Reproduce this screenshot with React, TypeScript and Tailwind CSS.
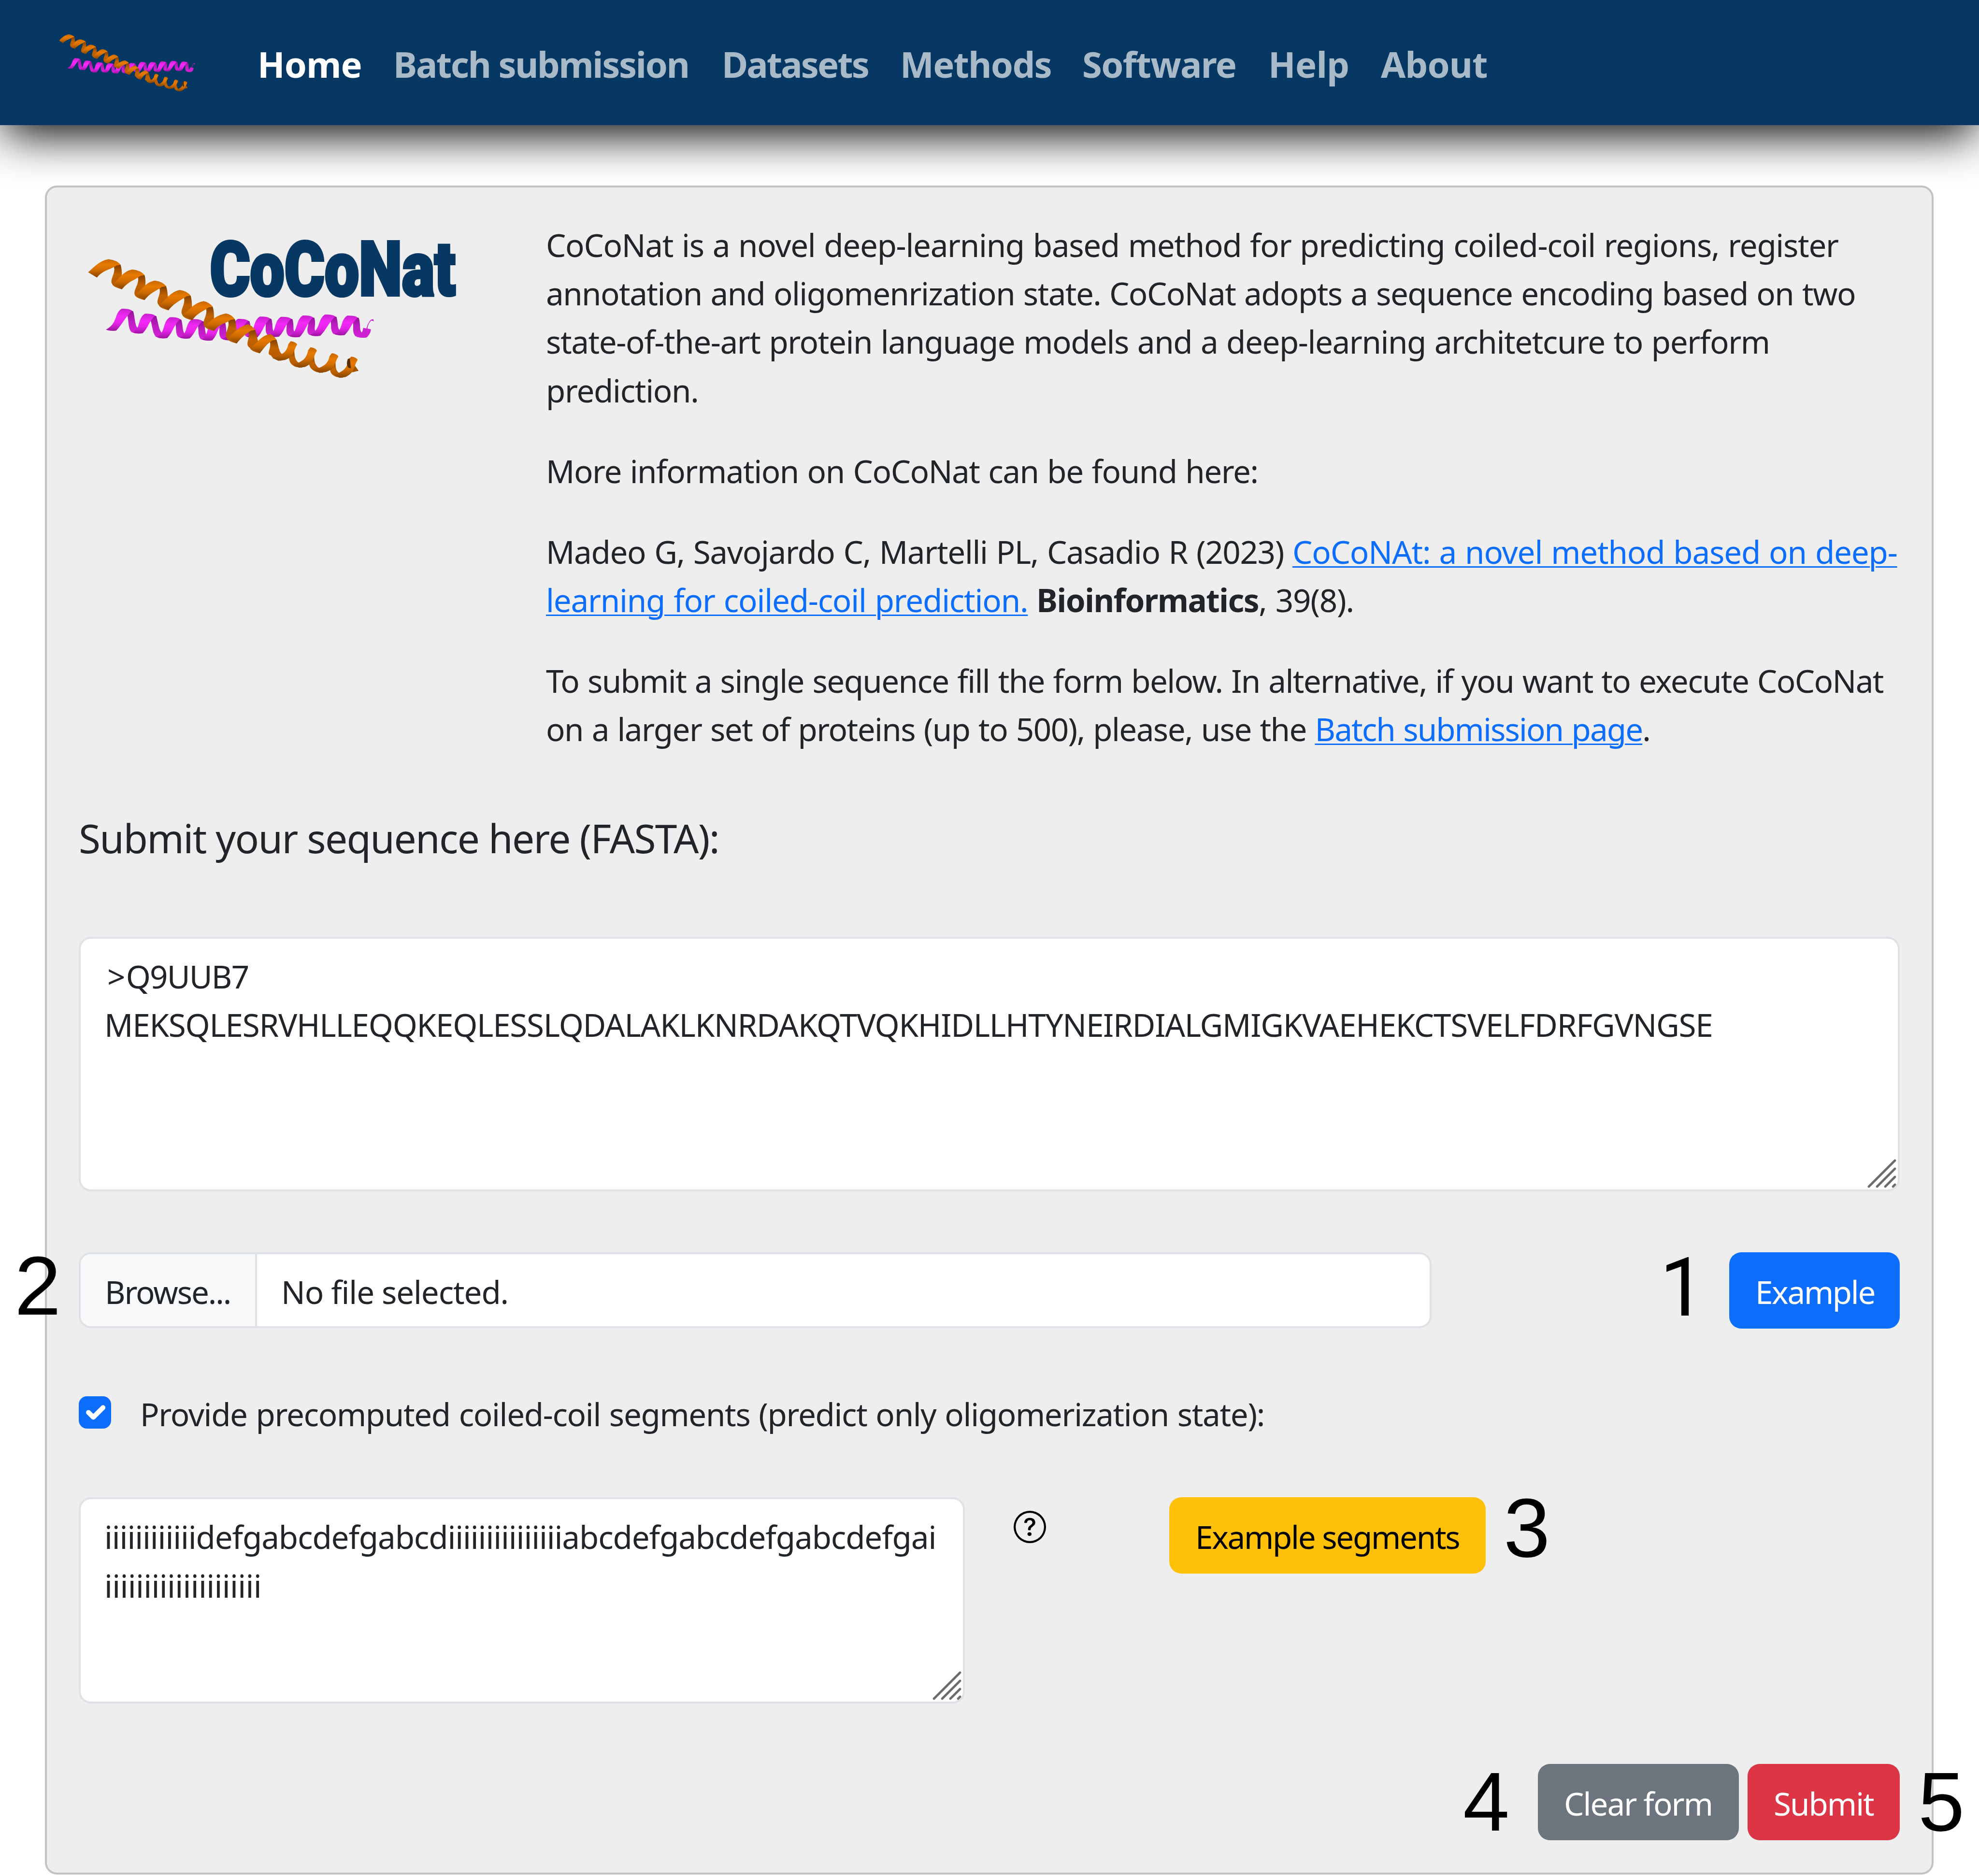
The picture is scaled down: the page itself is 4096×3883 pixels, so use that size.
import type { ReactNode } from "react";
import { BsQuestionCircle } from "react-icons/bs";

type Point = [number, number];

const navItems = [
  { label: "Home", style: "w-[281px] tracking-[-0.8px] text-white" },
  { label: "Batch submission", style: "w-[680px] tracking-[-2.3px] text-white/65" },
  { label: "Datasets", style: "w-[369px] tracking-[-2.8px] text-white/65" },
  { label: "Methods", style: "w-[377px] tracking-[-1.6px] text-white/65" },
  { label: "Software", style: "w-[385px] tracking-[-1.6px] text-white/65" },
  { label: "Help", style: "w-[233px] tracking-[-0.5px] text-white/65" },
  { label: "About", style: "tracking-[-0.8px] text-white/65" },
];

const orangePeaks: Point[] = [
  [140, 278], [233, 355], [320, 437], [417, 507], [509, 590], [597, 682],
  [683, 762], [768, 835], [848, 888], [925, 933], [1008, 977], [1083, 1002],
];
const orangeBottoms: Point[] = [
  [95, 415], [192, 502], [280, 582], [373, 658], [465, 732], [550, 812],
  [638, 905], [728, 978], [810, 1034], [890, 1085], [970, 1123], [1048, 1160],
];
const pinkPeaks: Point[] = [
  [203, 645], [293, 682], [390, 708], [477, 722], [560, 726], [655, 720],
  [740, 703], [822, 705], [907, 695], [993, 688], [1080, 696],
];
const pinkBottoms: Point[] = [
  [152, 812], [255, 832], [350, 868], [438, 870], [525, 885], [605, 882],
  [700, 864], [785, 857], [865, 860], [945, 851], [1040, 845], [1125, 862],
];

// the ribbon gets narrower towards the right end
const ribbonWidth = [47, 47, 44, 42, 36, 34, 27, 25];

// ribbon going up towards the viewer
function orangeFront(i: number) {
  const [px, py] = orangePeaks[i];
  const [bx, by] = orangeBottoms[i];
  if (i > 7) {
    return `M${bx - 34} ${by - 22} C${bx + 6} ${by - 45} ${px - 16} ${py + 85} ${px - 9} ${py + 22} L${px} ${py} Q${px + 22} ${py + 6} ${px + 25} ${py + 26} C${px + 8} ${py + 75} ${px + 16} ${py + 115} ${bx + 14} ${by - 6} L${bx - 10} ${by} Z`;
  }
  const w = ribbonWidth[i];
  return `M${bx - 34} ${by - 40} L${bx} ${by} C${bx + 26} ${by - 60} ${px + w - 41} ${py + 82} ${px + w - 17} ${py + 48} L${px + w} ${py + 42} Q${px + w - 13} ${py + 8} ${px} ${py} C${px - 34} ${py + 12} ${bx - 6} ${by - 88} ${bx - 34} ${by - 40} Z`;
}

// ribbon going down behind
function orangeBack(i: number) {
  const [px, py] = orangePeaks[i];
  const [bx, by] = orangeBottoms[i + 1];
  if (i > 7) {
    return `M${px - 10} ${py + 60} C${px - 6} ${py + 130} ${bx - 52} ${by - 30} ${bx - 22} ${by - 6} L${bx + 2} ${by} L${bx + 12} ${by - 22} C${bx - 24} ${by - 30} ${px + 14} ${py + 120} ${px + 14} ${py + 55} Z`;
  }
  const w = ribbonWidth[i];
  return `M${px + w - 29} ${py + 45} C${px + w - 13} ${py + 95} ${px + w - 45} ${py + 150} ${bx - 38} ${by - 40} Q${bx - 34} ${by - 15} ${bx} ${by} L${bx + 12} ${by - 40} C${bx - 8} ${by - 60} ${px + w + 11} ${py + 110} ${px + w} ${py + 42} L${px + w - 17} ${py + 22} Z`;
}

function pinkFront([px, py]: Point, [bx, by]: Point) {
  return `M${bx - 22} ${by - 10} Q${bx - 8} ${by + 3} ${bx + 18} ${by - 3} C${bx + 42} ${by - 50} ${px} ${py + 70} ${px + 28} ${py + 16} Q${px + 18} ${py} ${px - 12} ${py + 2} C${px - 42} ${py + 40} ${px - 26} ${py + 110} ${bx - 22} ${by - 10} Z`;
}

function pinkBack([px, py]: Point, [bx, by]: Point) {
  return `M${px + 6} ${py + 30} C${px + 18} ${py + 70} ${bx - 42} ${by - 50} ${bx - 26} ${by - 12} Q${bx - 8} ${by + 4} ${bx + 12} ${by - 2} L${bx + 8} ${by - 30} C${bx - 14} ${by - 40} ${px + 42} ${py + 80} ${px + 33} ${py + 20} L${px + 10} ${py + 4} Z`;
}

function Coils({ id }: { id: string }) {
  return (
    <>
      <defs>
        <linearGradient id={id + "of"} x1="0" y1="0" x2="0" y2="1">
          <stop offset="0" stopColor="#c56700" />
          <stop offset="0.3" stopColor="#e87a00" />
          <stop offset="0.6" stopColor="#d06c00" />
          <stop offset="1" stopColor="#854300" />
        </linearGradient>
        <linearGradient id={id + "ob"} x1="0" y1="0" x2="0" y2="1">
          <stop offset="0" stopColor="#6b3500" />
          <stop offset="0.45" stopColor="#c26200" />
          <stop offset="1" stopColor="#b25a00" />
        </linearGradient>
        <linearGradient id={id + "pf"} x1="0" y1="0" x2="0" y2="1">
          <stop offset="0" stopColor="#c81fce" />
          <stop offset="0.35" stopColor="#f42af8" />
          <stop offset="0.65" stopColor="#e624ea" />
          <stop offset="1" stopColor="#9c149f" />
        </linearGradient>
        <linearGradient id={id + "pb"} x1="0" y1="0" x2="0" y2="1">
          <stop offset="0" stopColor="#8d1292" />
          <stop offset="0.5" stopColor="#bd1cc2" />
          <stop offset="1" stopColor="#d622da" />
        </linearGradient>
      </defs>
      {pinkPeaks.map((p, i) => (
        <path key={i} d={pinkBack(p, pinkBottoms[i + 1])} fill={`url(#${id}pb)`} />
      ))}
      {pinkPeaks.map((p, i) => (
        <path key={i} d={pinkFront(p, pinkBottoms[i])} fill={`url(#${id}pf)`} />
      ))}
      <path d="M1104 856 Q1125 866 1143 860 Q1158 835 1160 800 L1146 794 Q1150 750 1162 735 L1171 740 L1169 724 L1160 728 Q1148 750 1142 794 L1130 788 Q1128 835 1104 856 Z" fill="#cf20d4" />
      {orangePeaks.slice(0, -1).map((_, i) => (
        <path key={i} d={orangeBack(i)} fill={`url(#${id}ob)`} />
      ))}
      {orangePeaks.map((_, i) => (
        <path key={i} d={orangeFront(i)} fill={`url(#${id}of)`} />
      ))}
      <path d="M1070 1020 Q1062 1060 1072 1085 L1082 1090 L1078 1015 Z" fill="#5a2d00" />
      <path d="M1098 1070 L1112 1108 L1086 1120 Z" fill="#a65400" />
    </>
  );
}

function Logo() {
  return (
    <svg viewBox="0 0 835 351" className="ml-[53px] mt-[71px] h-[351px] w-[835px] shrink-0">
      <g transform="scale(0.5326 0.2784)">
        <Coils id="logo" />
      </g>
      <text
        transform="translate(284.5 152) scale(0.812 1)"
        fontSize="156"
        fill="#073763"
        stroke="#073763"
        strokeWidth="6"
        className="font-['Roboto'] font-black"
      >
        CoCoNat
      </text>
    </svg>
  );
}

function Grip() {
  return (
    <svg viewBox="0 0 60 60" className="absolute bottom-[3px] right-[3px] h-[60px] w-[60px]" stroke="#6b6b6b" strokeWidth="4.6" strokeLinecap="round">
      <path d="M3 57 L57 3 M20 57 L57 20 M37 57 L57 37 M53 57 L57 53" />
    </svg>
  );
}

function TextArea({ size, children }: { size: string; children: ReactNode }) {
  return (
    <div className={"relative rounded-[25px] border-4 border-[#dee2e6] bg-white pl-[49px] pt-[28px] whitespace-nowrap " + size}>
      {children}
      <Grip />
    </div>
  );
}

function Button({ style, children }: { style: string; children: ReactNode }) {
  return (
    <button className={"flex h-[158px] items-center rounded-[25px] pl-[54px] pt-[5px] whitespace-nowrap " + style}>
      {children}
    </button>
  );
}

function Link({ style, children }: { style: string; children: ReactNode }) {
  return <a className={"text-[#0d6efd] underline decoration-[3.4px] underline-offset-[5px] " + style}>{children}</a>;
}

function Intro() {
  return (
    <div className="flex">
      <Logo />
      <div className="ml-[145px] flex flex-col gap-[66.8px] pt-[69px] [word-spacing:2.2px] whitespace-nowrap">
        <div>
          <div className="tracking-[-1.3px]">CoCoNat is a novel deep-learning based method for predicting coiled-coil regions, register</div>
          <div className="tracking-[-1.56px]">annotation and oligomenrization state. CoCoNat adopts a sequence encoding based on two</div>
          <div className="tracking-[-1.42px]">state-of-the-art protein language models and a deep-learning architetcure to perform</div>
          <div className="tracking-[-1.3px]">prediction.</div>
        </div>
        <p className="tracking-[-1.46px]">More information on CoCoNat can be found here:</p>
        <div>
          <div className="tracking-[-1.33px]">
            Madeo G, Savojardo C, Martelli PL, Casadio R (2023){" "}
            <Link style="tracking-[-1.18px]">CoCoNAt: a novel method based on deep-</Link>
          </div>
          <div className="tracking-[-1.2px]">
            <Link style="">learning for coiled-coil prediction.</Link>{" "}
            <b className="tracking-[-1.4px]">Bioinformatics</b>, 39(8).
          </div>
        </div>
        <div>
          <div className="tracking-[-1.6px]">To submit a single sequence fill the form below. In alternative, if you want to execute CoCoNat</div>
          <div className="tracking-[-1.57px]">
            on a larger set of proteins (up to 500), please, use the{" "}
            <Link style="tracking-[-1.9px]">Batch submission page</Link>.
          </div>
        </div>
      </div>
    </div>
  );
}

function SubmitForm() {
  return (
    <form className="flex flex-col pl-[66px] pr-[66px]">
      <h5 className="mt-[113px] text-[82px] leading-[125px] tracking-[-1.65px]">Submit your sequence here (FASTA):</h5>
      <TextArea size="mt-[142px] h-[527px]">
        <div className="tracking-[-1.8px]">
          <span className="ml-[6px] mr-[3px]">&gt;</span>Q9UUB7
        </div>
        <div className="tracking-[-1.22px]">
          MEKSQLESRVHLLEQQKEQLESSLQDALAKLKNRDAKQTVQKHIDLLHTYNEIRDIALGMIGKVAEHEKCTSVELFDRFGVNGSE
        </div>
      </TextArea>

      <div className="mt-[126px] flex justify-between">
        <div className="flex h-[157px] w-[2800px] overflow-hidden rounded-[25px] border-4 border-[#dee2e6] bg-white">
          <div className="flex w-[365px] items-center border-r-4 border-[#dee2e6] bg-[#f8f9fa] pl-[50px] pt-[6px] tracking-[-2.1px]">Browse...</div>
          <div className="flex items-center pl-[50px] pt-[6px] tracking-[-1.1px]">No file selected.</div>
        </div>
        <Button style="w-[353px] bg-[#0d6efd] tracking-[-2.3px] text-white">Example</Button>
      </div>

      <div className="mt-[127px] flex">
        <div className="mt-[13px] h-[67px] w-[67px] rounded-[17px] bg-[#0d6efd]">
          <svg viewBox="0 0 20 20" fill="none" stroke="#fff" strokeWidth="3" strokeLinecap="round" strokeLinejoin="round">
            <path d="m6 10 3 3 6-6" />
          </svg>
        </div>
        <label className="ml-[60px] tracking-[-1.34px] [word-spacing:2.2px]">Provide precomputed coiled-coil segments (predict only oligomerization state):</label>
      </div>

      <div className="mt-[122px] flex">
        <TextArea size="h-[427px] w-[1834px]">
          <div className="tracking-[-1.1px]">iiiiiiiiiiiidefgabcdefgabcdiiiiiiiiiiiiiiiabcdefgabcdefgabcdefgai</div>
          <div className="tracking-[-0.65px]">iiiiiiiiiiiiiiiiiiii</div>
        </TextArea>
        <BsQuestionCircle className="ml-[101px] mt-[28px] h-[67px] w-[67px] text-black" />
        <Button style="ml-[255px] w-[655px] bg-[#ffc107] tracking-[-2.25px] text-black">Example segments</Button>
      </div>

      <div className="mt-[125px] flex justify-end gap-[18px]">
        <Button style="w-[416px] bg-[#6c757d] tracking-[-1.95px] text-white">Clear form</Button>
        <Button style="w-[315px] bg-[#dc3545] tracking-[-1.95px] text-white">Submit</Button>
      </div>
    </form>
  );
}

function Steps() {
  return (
    <div className="font-['Liberation_Sans',sans-serif] text-[173px] leading-none text-black">
      <span className="absolute left-[3435px] top-[2581px] font-['Roboto'] text-[169px] leading-none">1</span>
      <span className="absolute left-[30px] top-[2575px]">2</span>
      <span className="absolute left-[3112px] top-[3076px]">3</span>
      <span className="absolute left-[3028px] top-[3643px]">4</span>
      <span className="absolute left-[3970px] top-[3643px]">5</span>
    </div>
  );
}

function App() {
  return (
    <div className="relative h-[3883px] w-[4096px] overflow-hidden bg-white font-['Noto_Sans',sans-serif] text-[65.5px] leading-[100.2px] text-[#212529]">
      <nav className="flex h-[259px] items-center bg-[#073763] shadow-[0_27px_96px_-8px_#000]">
        <svg viewBox="65 278 1107 882" preserveAspectRatio="none" className="ml-[123px] h-[118px] w-[281px]">
          <Coils id="nav" />
        </svg>
        <div className="ml-[129px] flex pt-[7px] text-[74px] font-bold whitespace-nowrap">
          {navItems.map((item) => (
            <a key={item.label} className={item.style}>
              {item.label}
            </a>
          ))}
        </div>
      </nav>
      <main className="ml-[93px] mr-[94px] mt-[125px] h-[3496px] rounded-[25px] border-4 border-[#c3c3c3] bg-[#eeeeee]">
        <Intro />
        <SubmitForm />
      </main>
      <Steps />
    </div>
  );
}

export default App;
